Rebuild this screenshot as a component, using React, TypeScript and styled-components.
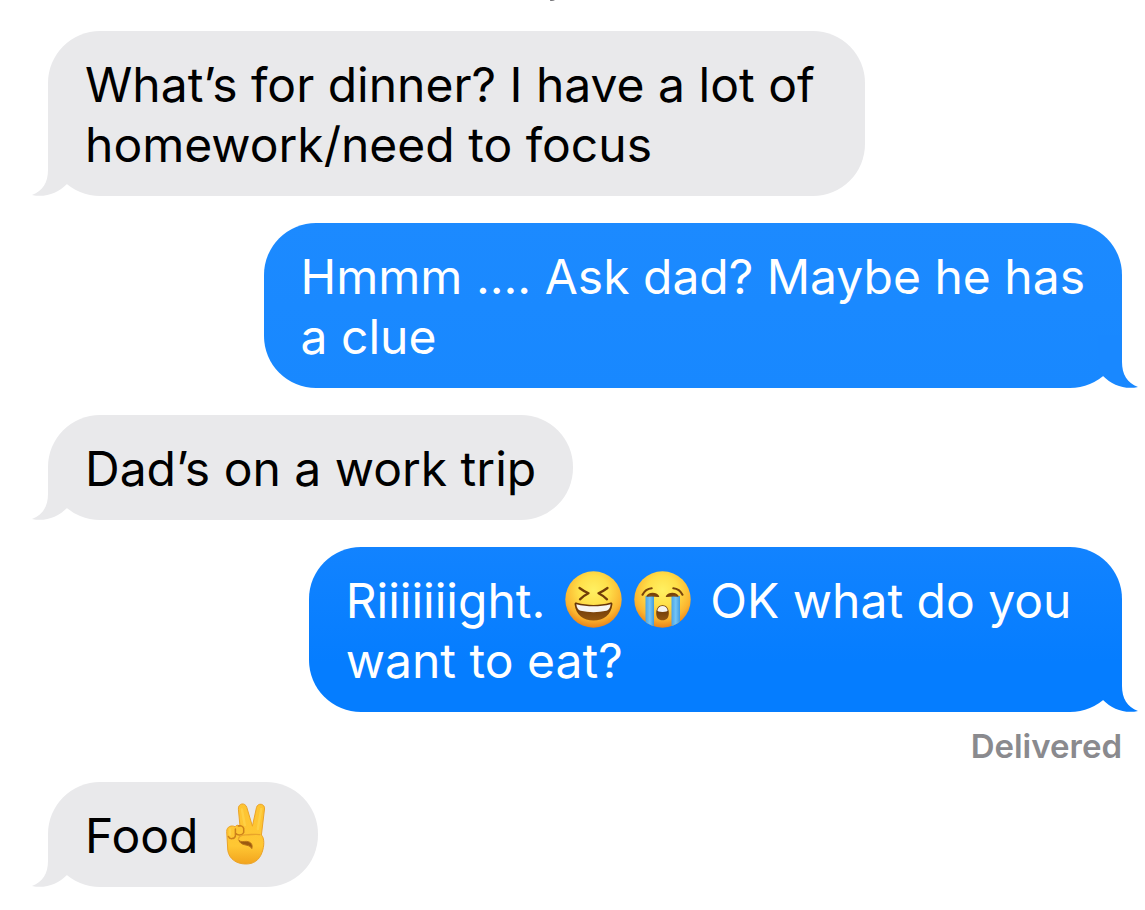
import React from "react";
import styled, { createGlobalStyle } from "styled-components";

type Side = "in" | "out";

const GlobalStyle = createGlobalStyle`
  * { box-sizing: border-box; }
  body {
    margin: 0;
    background: #fff;
    font-family: Inter, "Liberation Sans", sans-serif;
    -webkit-font-smoothing: antialiased;
  }
`;

const Page = styled.main`
  overflow: hidden;
  padding-bottom: 23px;
`;

const StampEdge = styled.svg`
  display: block;
  width: 8px;
  height: 2px;
  margin: 0 auto;
  transform: translateX(-20px);
`;

const Thread = styled.ol`
  list-style: none;
  margin: 0;
  padding: 29px 23px 0 48px;
  display: flex;
  flex-direction: column;
  gap: 27px;
`;

const Message = styled.li<{ $side: Side }>`
  display: flex;
  flex-direction: column;
  align-items: ${(p) => (p.$side === "out" ? "flex-end" : "flex-start")};
`;

const Bubble = styled.p<{ $side: Side; $fill: string }>`
  position: relative;
  margin: 0;
  padding: 24px 37px 21px;
  border-radius: 52px;
  background: ${(p) => p.$fill};
  color: ${(p) => (p.$side === "out" ? "#fff" : "#000")};
  font-size: 48px;
  line-height: 60px;
`;

const Line = styled.span`
  display: block;
  white-space: nowrap;
`;

const TailShape = styled.svg<{ $side: Side }>`
  position: absolute;
  bottom: 0;
  width: 40px;
  height: 53px;
  ${(p) => (p.$side === "out" ? "right: -16px; transform: scaleX(-1);" : "left: -16px;")}
`;

const Status = styled.small`
  padding-top: 13px;
  font-size: 33px;
  line-height: 42px;
  margin-bottom: -12px;
  font-weight: 600;
  color: #8a8a8e;
`;

const Emoji = styled.svg`
  width: 69px;
  height: 60px;
  vertical-align: top;
  overflow: visible;
`;

const Tail = ({ side, color }: { side: Side; color: string }) => (
  <TailShape $side={side} viewBox="0 0 40 53" aria-hidden="true">
    <path d="M16 0V27C16 39 11 48 0 52C13 55 26 50 35 41L40 30V0Z" fill={color} />
  </TailShape>
);

const FaceDefs = ({ id }: { id: string }) => (
  <defs>
    <radialGradient id={id} cx="0.5" cy="0.34" r="0.66">
      <stop offset="0" stopColor="#fff062" />
      <stop offset="0.4" stopColor="#ffe04a" />
      <stop offset="0.78" stopColor="#fbb42f" />
      <stop offset="1" stopColor="#e9831a" />
    </radialGradient>
    <linearGradient id={id + "-tear"} x1="0" x2="1">
      <stop offset="0" stopColor="#4aa5e6" />
      <stop offset="0.5" stopColor="#74c4f5" />
      <stop offset="1" stopColor="#3f9be0" />
    </linearGradient>
    <linearGradient id={id + "-mouth"} x1="0" y1="0" x2="0" y2="1">
      <stop offset="0" stopColor="#633206" />
      <stop offset="1" stopColor="#925510" />
    </linearGradient>
    <clipPath id={id + "-clip"}>
      <circle cx="34.5" cy="28.5" r="28.2" />
    </clipPath>
  </defs>
);

const Laughing = () => (
  <Emoji viewBox="0 0 69 60" role="img" aria-label="Laughing face">
    <FaceDefs id="laugh" />
    <circle cx="34.5" cy="28.5" r="28.2" fill="url(#laugh)" />
    <g fill="none" stroke="#713c08" strokeWidth="2.3" strokeLinecap="round" strokeLinejoin="round">
      <path d="M20.5 17Q24.5 20 29.5 22.3Q25 24.5 21 28.3" />
      <path d="M48.5 17Q44.5 20 39.5 22.3Q44 24.5 48 28.3" />
    </g>
    <path d="M15.6 33.5C15.3 31.8 16.5 31.3 18 31.8C28 34.6 41 34.6 51 31.8C52.5 31.3 53.7 31.8 53.4 33.5C52 44 44.5 49.4 34.5 49.4C24.5 49.4 17 44 15.6 33.5Z" fill="url(#laugh-mouth)" />
    <path d="M17.3 33.3C28 36 41 36 51.7 33.3C51.2 37 50 39 47.4 39.8C39 41.6 30 41.6 21.6 39.8C19 39 17.8 37 17.3 33.3Z" fill="#f7f5f2" />
  </Emoji>
);

const Crying = () => (
  <Emoji viewBox="0 0 69 60" role="img" aria-label="Loudly crying face">
    <FaceDefs id="cry" />
    <circle cx="34.5" cy="28.5" r="28.2" fill="url(#cry)" />
    <g clipPath="url(#cry-clip)">
      <rect x="17.5" y="25" width="8.5" height="34" fill="url(#cry-tear)" />
      <rect x="43.5" y="25" width="8.5" height="34" fill="url(#cry-tear)" />
    </g>
    <g fill="none" stroke="#79430b" strokeWidth="2.1" strokeLinecap="round">
      <path d="M14.5 23.7Q17.5 18 23.7 17.3" />
      <path d="M54.5 23.7Q51.5 18 45.3 17.3" />
    </g>
    <path d="M19 25.2C21.5 21.4 27.8 21.4 30.6 25.4C26.5 24.8 23 24.6 19 25.2Z" fill="#79430b" stroke="#79430b" strokeWidth="1.2" strokeLinejoin="round" />
    <path d="M50 25.2C47.5 21.4 41.2 21.4 38.4 25.4C42.5 24.8 46 24.6 50 25.2Z" fill="#79430b" stroke="#79430b" strokeWidth="1.2" strokeLinejoin="round" />
    <path d="M34.5 34.2C38.5 34.2 40.8 37.6 40.8 42C40.8 46.8 38.5 49.3 34.5 49.3C30.5 49.3 28.2 46.8 28.2 42C28.2 37.6 30.5 34.2 34.5 34.2Z" fill="url(#cry-mouth)" />
    <path d="M34.5 34.9C37.5 34.9 39.3 37 39.6 39.3C39.6 40.6 38 41 34.5 41C31 41 29.4 40.6 29.4 39.3C29.7 37 31.5 34.9 34.5 34.9Z" fill="#f5f3f0" />
  </Emoji>
);

const Victory = () => (
  <Emoji viewBox="0 0 69 60" role="img" aria-label="Victory hand">
    <defs>
      <linearGradient id="skin" x1="0" y1="0" x2="0" y2="1">
        <stop offset="0" stopColor="#fdc432" />
        <stop offset="0.7" stopColor="#ffc733" />
        <stop offset="1" stopColor="#f2a41e" />
      </linearGradient>
    </defs>
    <path d="M28 20.5L26.4 3.2C25.8 -2.8 33.2 -4 34.8 1.4L40.4 20.2L44.5 1.4C45.8 -3.6 53.2 -2.4 52.5 3L49.4 29C52.6 32 52.4 40 50 46.5C47.2 54.4 41.4 58.2 33.4 58C24.4 57.8 17.2 53 15.8 44.5L14.7 25.5C14.6 20.4 19.9 18.8 23 20.8C24.4 18.8 26.4 18.8 28 20.5Z" fill="url(#skin)" stroke="#eba327" strokeWidth="1" />
    <path d="M16.4 30.5C17.6 33.6 22.6 33.2 23.4 30V23M24 27.5C25.8 29.8 30.4 29.5 31.7 26.5V22.5C31.2 20 28.9 19.4 26.4 20" fill="none" stroke="#cd811b" strokeWidth="1.5" strokeLinecap="round" />
    <path d="M26.4 34C26 30.6 29.4 28.8 33.9 28.8C39.4 28.8 43.4 27.8 47.8 28.6" fill="none" stroke="#e9a42a" strokeWidth="1.3" strokeLinecap="round" />
    <path d="M27 34.4C29 36.4 31.8 35.2 34.8 35.4C38.8 35.8 41 38.4 39.8 42.6C38.2 39.6 35.8 39.6 32.8 38.8C29.6 38 27.6 36.6 27 34.4Z" fill="#9b5a10" stroke="#b87218" strokeWidth="1" strokeLinejoin="round" />
    <path d="M18 23.5V28.5M29.9 3.5L32.8 19M49.2 3L45.8 23" stroke="#ffd650" strokeWidth="2.4" strokeLinecap="round" opacity=".65" />
  </Emoji>
);

const GRAY = "#e9e9eb";

interface Entry {
  side: Side;
  fill: string;
  tail: string;
  lines: React.ReactNode[];
  status?: string;
}

const messages: Entry[] = [
  {
    side: "in",
    fill: GRAY,
    tail: GRAY,
    lines: [<>What’s for dinner? I have a lot of&nbsp;</>, "homework/need to focus"],
  },
  {
    side: "out",
    fill: "linear-gradient(#1c8aff, #1888ff)",
    tail: "#1988ff",
    lines: ["Hmmm .... Ask dad? Maybe he has", "a clue"],
  },
  { side: "in", fill: GRAY, tail: GRAY, lines: ["Dad’s on a work trip"] },
  {
    side: "out",
    fill: "linear-gradient(#1283ff, #057dff 70%)",
    tail: "#057dff",
    lines: [<>Riiiiiiight. <Laughing /><Crying /> OK what do you&nbsp;</>, "want to eat?"],
    status: "Delivered",
  },
  { side: "in", fill: GRAY, tail: GRAY, lines: [<>Food <Victory /></>] },
];

export default function App() {
  return (
    <Page>
      <GlobalStyle />
      <StampEdge viewBox="0 0 8 2" aria-hidden="true">
        <path d="M1 0H6Q4 1.3 1 .7Z" fill="#77777b" />
      </StampEdge>
      <Thread>
        {messages.map((m, i) => (
          <Message key={i} $side={m.side}>
            <Bubble $side={m.side} $fill={m.fill}>
              <Tail side={m.side} color={m.tail} />
              {m.lines.map((line, n) => (
                <Line key={n}>{line}</Line>
              ))}
            </Bubble>
            {m.status && <Status>{m.status}</Status>}
          </Message>
        ))}
      </Thread>
    </Page>
  );
}
